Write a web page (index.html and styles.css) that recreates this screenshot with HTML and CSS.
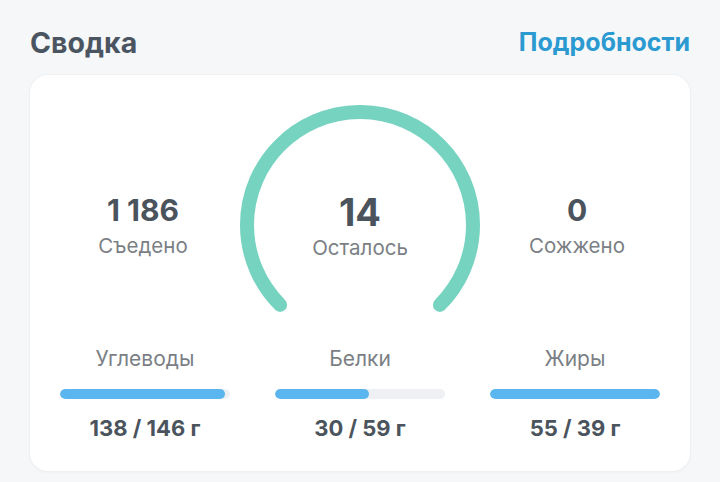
FILE: index.html
```html
<!DOCTYPE html>
<html lang="ru">
<head>
<meta charset="utf-8">
<link rel="stylesheet" href="styles.css">
</head>
<body>
<div class="page">
  <header class="head">
    <h1 class="title">Сводка</h1>
    <a class="more">Подробности</a>
  </header>
  <section class="card">
    <div class="top">
      <div class="stat">
        <div class="num">1 186</div>
        <div class="lbl">Съедено</div>
      </div>
      <div class="gauge">
        <svg class="arc" width="240" height="240" viewBox="0 0 240 240">
          <path d="M 40.1 199.9 A 113 113 0 1 1 199.9 199.9" fill="none" stroke="#76d3c0" stroke-width="14" stroke-linecap="round"/>
        </svg>
        <div class="center">
          <div class="num big">14</div>
          <div class="lbl">Осталось</div>
        </div>
      </div>
      <div class="stat">
        <div class="num">0</div>
        <div class="lbl">Сожжено</div>
      </div>
    </div>
    <div class="macros">
      <div class="macro">
        <div class="mlbl">Углеводы</div>
        <div class="track"><div class="fill" style="width:97%"></div></div>
        <div class="mval">138 / 146 г</div>
      </div>
      <div class="macro">
        <div class="mlbl">Белки</div>
        <div class="track"><div class="fill" style="width:55%"></div></div>
        <div class="mval">30 / 59 г</div>
      </div>
      <div class="macro">
        <div class="mlbl">Жиры</div>
        <div class="track"><div class="fill" style="width:100%"></div></div>
        <div class="mval">55 / 39 г</div>
      </div>
    </div>
  </section>
</div>
</body>
</html>
```

FILE: styles.css
```css
* { box-sizing: border-box; }
html, body { margin: 0; padding: 0; }
body {
  background: #f6f7f9;
  font-family: Inter, "Noto Sans", sans-serif;
  width: 720px;
  height: 482px;
  overflow: hidden;
}
.page { padding: 24px 30px 0 30px; }
.head {
  display: flex;
  justify-content: space-between;
  align-items: center;
  height: 36px;
}
.title {
  margin: 0;
  font-size: 28.5px;
  font-weight: 700;
  color: #4a5561;
}
.more {
  font-size: 25px;
  font-weight: 700;
  color: #2a9ad1;
}
.card {
  margin-top: 15px;
  height: 396px;
  background: #fff;
  border-radius: 18px;
  box-shadow: 0 0 0 1px #eef0f2, 0 1px 3px rgba(0,0,0,0.06);
  padding: 30px 16px 0 16px;
}
.top {
  display: grid;
  grid-template-columns: 1fr 240px 1fr;
  align-items: center;
  height: 240px;
}
.stat, .center {
  display: flex;
  flex-direction: column;
  align-items: center;
}
.num {
  font-size: 30px;
  line-height: 34px;
  font-weight: 700;
  color: #4b545d;
}
.num.big {
  font-size: 38px;
  line-height: 42px;
}
.lbl {
  margin-top: 6px;
  font-size: 20.5px;
  line-height: 25px;
  color: #7b7f85;
}
.center .lbl { margin-top: 2px; }
.gauge {
  display: grid;
  width: 240px;
  height: 240px;
  place-items: center;
}
.gauge > * { grid-area: 1 / 1; }
.arc { display: block; }
.macros {
  display: grid;
  grid-template-columns: repeat(3, 170px);
  column-gap: 45px;
  padding: 0 14px;
  margin-top: 2px;
}
.macro {
  display: flex;
  flex-direction: column;
  align-items: center;
}
.mlbl {
  font-size: 21px;
  line-height: 24px;
  color: #7b7f85;
}
.track {
  margin-top: 18px;
  width: 170px;
  height: 10px;
  border-radius: 5px;
  background: #eef0f3;
  overflow: hidden;
}
.fill {
  height: 100%;
  border-radius: 5px;
  background: #5bb6ef;
}
.mval {
  margin-top: 15px;
  font-size: 22px;
  line-height: 28px;
  font-weight: 700;
  color: #4b545d;
}
```
